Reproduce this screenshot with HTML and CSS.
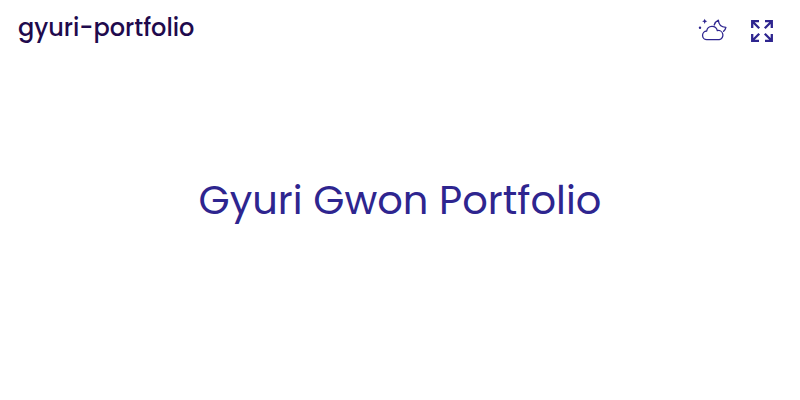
FILE: index.html
```html
<!DOCTYPE html>
<html lang="en">
<head>
<meta charset="utf-8">
<meta name="viewport" content="width=device-width, initial-scale=1">
<title>gyuri-portfolio</title>
<link rel="stylesheet" href="styles.css">
</head>
<body>
<header class="header">
  <a class="brand" href="#">gyuri-portfolio</a>
  <div class="actions">
    <button class="icon-button" type="button" aria-label="Toggle theme">
      <svg class="icon" viewBox="0 0 32 32" aria-hidden="true">
        <g fill="none" stroke="currentColor" stroke-width="1.3" stroke-linecap="round" stroke-linejoin="round">
          <path d="M11 25.600a4.300 4.300 0 0 1-.3-8.600 5.400 5.400 0 0 1 10.600-.4 4.600 4.600 0 1 1 2 9z"/>
          <path d="M18.200 11a8 8 0 0 1 4.200-4.800c.2 4.300 3 6.900 7.500 7.100a7.500 7.500 0 0 1-2.300 4"/>
        </g>
        <path fill="currentColor" d="M8.700 4.700l.8 1.800 1.800.8-1.800.8-.8 1.800-.8-1.800-1.800-.8 1.800-.8z"/>
        <circle cx="4" cy="13.700" r="1.200" fill="currentColor"/>
      </svg>
    </button>
    <button class="icon-button" type="button" aria-label="Full screen">
      <svg class="icon" viewBox="0 0 32 32" aria-hidden="true">
        <path fill="none" stroke="currentColor" stroke-width="2.300" d="M15 7.200H8.200V14M8.200 7.200l7 7M21 7.200h6.800V14M27.800 7.200l-7 7M8.200 20v6.800H15M8.200 26.800l7-7M27.800 20v6.800H21M27.800 26.800l-7-7"/>
      </svg>
    </button>
  </div>
</header>
<main class="hero">
  <h1 class="title">Gyuri Gwon Portfolio</h1>
</main>
</body>
</html>
```
FILE: styles.css
```css
* {
  box-sizing: border-box;
}

body {
  display: flex;
  flex-direction: column;
  min-height: 100vh;
  margin: 0;
  background: #fff;
  color: #2e258f;
  font-family: Poppins, Inter, sans-serif;
}

.header {
  display: flex;
  align-items: flex-start;
  justify-content: space-between;
  padding: 10px 24px 10px 18px;
}

.brand {
  color: #1f0a4d;
  font-size: 24px;
  font-weight: 500;
  line-height: 36px;
  text-decoration: none;
}

.actions {
  display: flex;
  gap: 16px;
  padding-top: 4px;
}

.icon-button {
  padding: 0;
  border: 0;
  background: none;
  color: inherit;
  cursor: pointer;
}

.icon {
  display: block;
  width: 32px;
  height: 32px;
}

.hero {
  display: flex;
  flex: 1;
  align-items: center;
  justify-content: center;
  padding-bottom: 56px;
}

.title {
  margin: 0;
  font-size: 40px;
  font-weight: 400;
  line-height: 60px;
  text-align: center;
}
```
